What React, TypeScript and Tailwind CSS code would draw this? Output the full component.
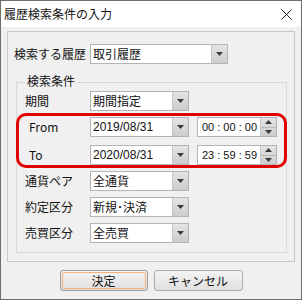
const Tri = ({ up = false }: { up?: boolean }) => (
  <svg width="7" height="4" viewBox="0 0 7 4">
    <path d={up ? 'M3.5 0L7 4H0z' : 'M0 0h7L3.5 4z'} fill="#3a3a3a" />
  </svg>
);

const Combo = ({ value, w, mono = false }: { value: string; w: string; mono?: boolean }) => (
  <div className={`flex h-[20px] ${w} border border-[#b4b4b4] bg-white`}>
    <div
      className={`flex flex-1 items-center pl-[2px] text-[12px] leading-[14px] ${
        mono ? "font-['Liberation_Sans',sans-serif]" : ''
      }`}
    >
      {value}
    </div>
    <div className="flex w-[16px] items-center justify-center border-l border-[#c6c6c6] bg-linear-to-b from-[#e4e4e4] to-[#cdcdcd]">
      <Tri />
    </div>
  </div>
);

const TimeField = ({ value }: { value: string }) => (
  <div className="flex h-[20px] w-[80px] border border-[#b4b4b4] bg-white">
    <div className="flex flex-1 items-center justify-center pl-[1px] font-['Liberation_Sans',sans-serif] text-[11px] leading-[13px]">
      {value}
    </div>
    <div className="flex w-[16px] flex-col border-l border-[#c6c6c6] bg-linear-to-b from-[#e4e4e4] to-[#cdcdcd]">
      <div className="flex flex-1 items-center justify-center border-b border-[#b8b8b8]">
        <Tri up />
      </div>
      <div className="flex flex-1 items-center justify-center">
        <Tri />
      </div>
    </div>
  </div>
);

const Row = ({ label, lw, children }: { label: string; lw: string; children: React.ReactNode }) => (
  <div className="flex h-[20px] items-center">
    <div className={`${lw} text-[12px] leading-[14px]`}>{label}</div>
    {children}
  </div>
);

export default function App() {
  return (
    <div className="flex h-[300px] w-[302px] flex-col border border-[#6e6e6e] bg-[#f0f0f0] font-['Noto_Sans_CJK_JP','Noto_Sans',sans-serif] text-[#111]">
      {/* title bar */}
      <div className="flex h-[26px] items-center justify-between bg-white pl-[3px] pr-[9px]">
        <span className="text-[12px] leading-[14px]">履歴検索条件の入力</span>
        <svg width="11" height="11" viewBox="0 0 11 11">
          <path d="M0.5 0.5l10 10M10.5 0.5l-10 10" stroke="#222" strokeWidth="1" />
        </svg>
      </div>

      {/* outer panel */}
      <div className="mx-[6px] mt-[4px] flex flex-col border border-[#c8c8c8] pl-[6px] pt-[12px]">
        <Row label="検索する履歴" lw="w-[76px]">
          <Combo value="取引履歴" w="w-[138px]" />
        </Row>

        {/* group box */}
        <div className="relative mb-[8px] ml-[2px] mr-[7px] mt-[18px] flex flex-col border border-[#d9d9d9] pb-[9px] pt-[8px]">
          <span className="absolute left-[8px] top-[-9px] bg-[#f0f0f0] px-[2px] text-[12px] leading-[14px]">
            検索条件
          </span>
          <div className="pl-[8px]">
            <Row label="期間" lw="w-[65px]">
              <Combo value="期間指定" w="w-[99px]" />
            </Row>
          </div>

          {/* highlighted range */}
          <div className="-mx-[1px] mt-[2px] flex flex-col gap-[8px] rounded-[10px] border-[3px] border-[#e00000] pt-[1px]">
            <div className="flex items-center pl-[10px]">
              <Row label="From" lw="w-[61px]">
                <Combo value="2019/08/31" w="w-[99px]" mono />
              </Row>
              <div className="ml-[8px]">
                <TimeField value="00 : 00 : 00" />
              </div>
            </div>
            <div className="flex items-center pl-[10px]">
              <Row label="To" lw="w-[61px]">
                <Combo value="2020/08/31" w="w-[99px]" mono />
              </Row>
              <div className="ml-[8px]">
                <TimeField value="23 : 59 : 59" />
              </div>
            </div>
          </div>

          <div className="mt-[3px] flex flex-col gap-[6px] pl-[8px]">
            <Row label="通貨ペア" lw="w-[65px]">
              <Combo value="全通貨" w="w-[99px]" />
            </Row>
            <Row label="約定区分" lw="w-[65px]">
              <Combo value="新規･決済" w="w-[99px]" />
            </Row>
            <Row label="売買区分" lw="w-[65px]">
              <Combo value="全売買" w="w-[99px]" />
            </Row>
          </div>
        </div>
      </div>

      {/* buttons */}
      <div className="mt-[8px] flex justify-center gap-[6px]">
        <button className="h-[21px] w-[88px] rounded-[3px] border border-[#9c9c9c] bg-linear-to-b from-[#f4f4f4] to-[#e0e0e0] p-[1px]">
          <div className="flex h-full w-full items-center justify-center rounded-[2px] border border-[#f3b27a] text-[12px] leading-[14px]">
            決定
          </div>
        </button>
        <button className="flex h-[21px] w-[89px] items-center justify-center rounded-[3px] border border-[#acacac] bg-linear-to-b from-[#f4f4f4] to-[#e0e0e0] text-[12px] leading-[14px]">
          キャンセル
        </button>
      </div>
    </div>
  );
}
